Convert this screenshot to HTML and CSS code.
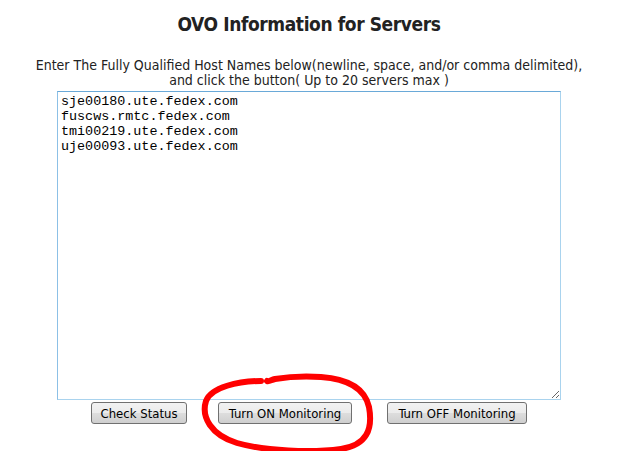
FILE: index.html
```html
<!DOCTYPE html>
<html lang="en">
<head>
    <meta charset="UTF-8">
    <title>OVO Information for Servers</title>
    <link rel="stylesheet" href="styles.css">
</head>
<body>
    <div class="page">
        <h1>OVO Information for Servers</h1>
        <p class="intro">Enter The Fully Qualified Host Names below(newline, space, and/or comma delimited),<br>and click the button( Up to 20 servers max )</p>

        <textarea class="hosts" id="hosts" spellcheck="false">sje00180.ute.fedex.com
fuscws.rmtc.fedex.com
tmi00219.ute.fedex.com
uje00093.ute.fedex.com</textarea>

        <div class="actions">
            <button class="btn btn-status">Check Status</button>
            <div class="marked">
                <button class="btn btn-on">Turn ON Monitoring</button>
                <svg class="scribble" width="180" height="84" viewBox="0 0 180 84">
                    <path d="M60 10 C 38 10, 10 16, 5 30 C 0 46, 10 64, 36 72 C 64 80, 110 82, 140 78 C 166 74, 172 58, 168 36 C 164 18, 148 8, 120 6 C 104 5, 86 6, 74 8 C 70 9, 68 11, 66 10" fill="none" stroke="#f00" stroke-width="6" stroke-linecap="round" stroke-linejoin="round"/>
                </svg>
            </div>
            <button class="btn btn-off">Turn OFF Monitoring</button>
        </div>
    </div>
</body>
</html>
```

FILE: styles.css
```css
body {
    margin: 0;
    background: #ffffff;
    font-family: 'DejaVu Sans', Verdana, sans-serif;
    font-stretch: condensed;
    color: #222;
}

.page {
    display: flex;
    flex-direction: column;
    align-items: center;
    width: 618px;
}

h1 {
    font-size: 19px;
    font-weight: bold;
    letter-spacing: -0.4px;
    margin: 12px 0 0;
    line-height: 24px;
    color: #222;
}

.intro {
    font-size: 14px;
    line-height: 15px;
    text-align: center;
    margin: 22px 0 0;
    color: #222;
}

.hosts {
    box-sizing: border-box;
    width: 504px;
    height: 309px;
    margin: 3px 0 0;
    padding: 2px 3px;
    border: 1px solid #a9d3ee;
    border-top-color: #6aa9d8;
    border-left-color: #8cc0e6;
    font-family: 'Liberation Mono', 'Courier New', monospace;
    font-size: 13.4px;
    line-height: 15px;
    color: #000;
    resize: both;
    outline: none;
}

.actions {
    display: flex;
    align-items: flex-start;
    margin-top: 2px;
    height: 50px;
}

.marked {
    position: relative;
    margin: 0 35px 0 31px;
}

.btn {
    font-family: 'DejaVu Sans', Tahoma, sans-serif;
    font-stretch: condensed;
    font-size: 13px;
    height: 22px;
    padding: 0 6px;
    border: 1px solid #707070;
    border-radius: 3px;
    background: linear-gradient(#f2f2f2 0%, #ebebeb 50%, #dddddd 51%, #cfcfcf 100%);
    color: #000;
    cursor: pointer;
}

.btn-status {
    width: 96px;
}

.btn-on {
    width: 134px;
}

.btn-off {
    width: 140px;
}

.scribble {
    position: absolute;
    left: -17px;
    top: -31px;
    pointer-events: none;
}
```
